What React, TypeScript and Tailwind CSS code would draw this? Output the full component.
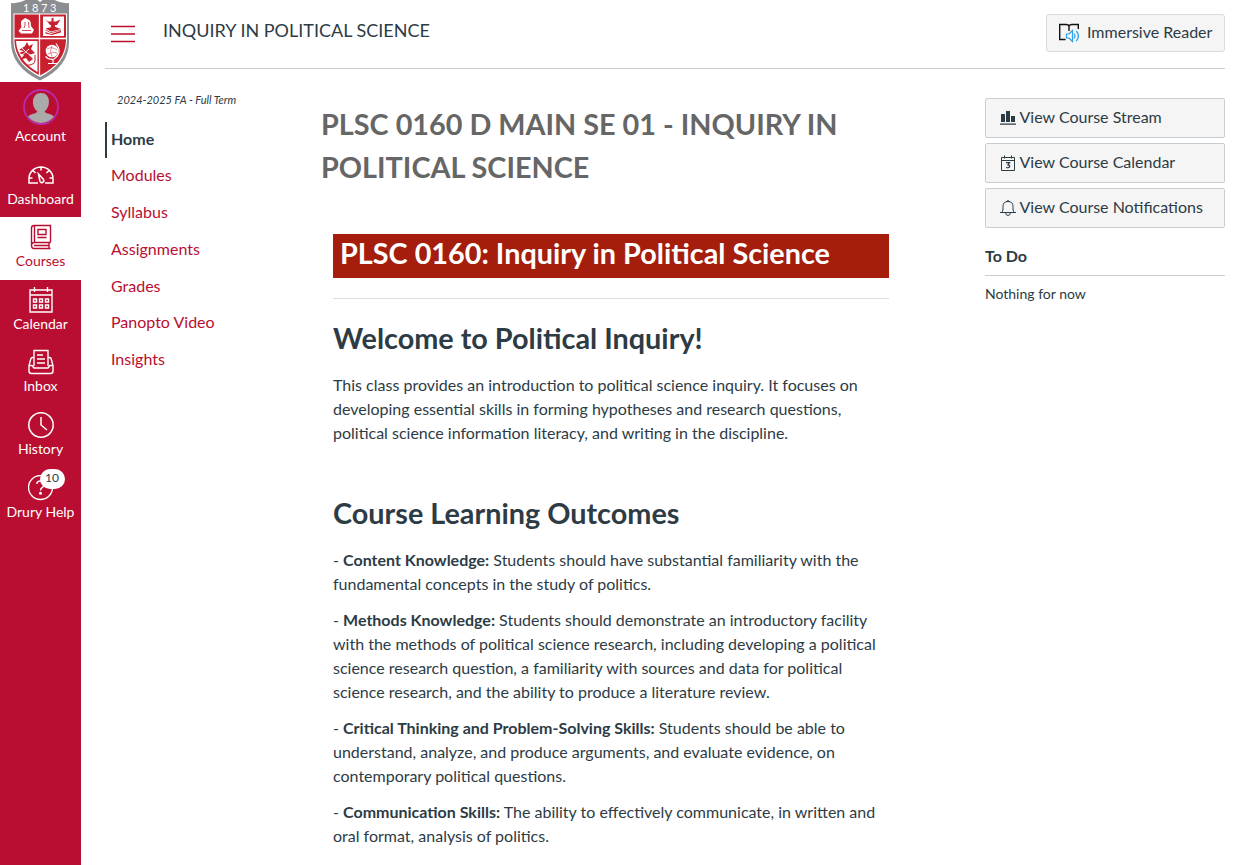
import type { ReactNode } from 'react';

const line = { fill: 'none', stroke: 'currentColor' } as const;

function Crest() {
  return (
    <svg width="81" height="82" viewBox="0 0 81 82" className="block">
      <path d="M11 3Q20 4 29 -2H51Q60 4 69 3V40Q70 66 40 80.500Q10 66 11 40Z" fill="#8b8d90" />
      <path d="M37.500 0H42.500L40 2Z" fill="#fff" />
      <text x="41" y="12" textAnchor="middle" fontSize="11" letterSpacing="2.600" fill="#fff" className="font-['Lato',sans-serif]">1873</text>
      <path d="M13.500 13.500H67V41Q66 64 40 77Q14 64 13.500 41Z" fill="#fff" />
      <path d="M14.500 14.500H66V41Q65 63 40 75.500Q15 63 14.500 41Z" fill="#c8202f" />
      <path d="M39.500 14V76M14 38.500H66" stroke="#fff" strokeWidth="1.300" />
      <path d="M43 16.500H64V36H43Z" fill="#fff" />
      <path d="M16 41H37.500V72Q17 60 16 41Z" fill="#fff" />
      <path d="M18.500 31L21.500 27Q19.500 20 24 19Q25 17 27 19Q31.500 20 31 26L34 30L32 33.500H21Z" fill="#fff" />
      <path d="M24 28Q25.500 25 25 22M28.500 22L29 28M22 30.500H31" stroke="#c8202f" strokeWidth=".8" fill="none" />
      <path d="M44.500 19L48 21.500H56L60.500 19.500L57 25H50Q48 22 44.500 19Z M51.500 18.500L53.500 17.500V21.500H51.500Z M51.500 24.500H55V27H50.500Z" fill="#c8202f" />
      <path d="M45.500 28.500L54 26.500L61 29L51 31.500Z M45.500 32L51 34L61 30.800V32.500L52 35L45.500 33.500Z" fill="#c8202f" />
      <path d="M45.500 30L51 32.700L61 30" stroke="#c8202f" strokeWidth=".8" fill="none" />
      <path d="M19 50L25 46L27 42L29 46L33 44L31 49L35 53L29 55L33 59L29 62L26 58L20 60L24 55L19 53L24 51Z" fill="#c8202f" />
      <path d="M22 48L27 53L32 56M21 56L29 49" fill="none" stroke="#fff" strokeWidth=".9" />
      <path d="M21 60Q25 66 30 65T35 61V55" fill="none" stroke="#c8202f" />
      <circle cx="52" cy="51" r="6.300" fill="#fff" />
      <path d="M47 49Q52 46 57 50M48 54Q53 51 57 53M52 45.500Q49 51.500 52 56.500" fill="none" stroke="#c8202f" strokeWidth=".5" />
      <path d="M56 43.500Q63 52.500 54 59Q49 60.500 45.500 56.500M53 59.500V63M48 63.500H57" fill="none" stroke="#fff" strokeWidth="1.200" />
    </svg>
  );
}

function Avatar() {
  return (
    <svg width="36" height="36" viewBox="0 0 36 36">
      <circle cx="18" cy="18" r="17" fill="#b90e31" stroke="#b92bad" strokeWidth="1.800" />
      <path d="M5 27.500C8 24.500 13 25 14.500 22.500C8 18 8 4 18 4C28 4 28 18 21.500 22.500C23 25 28 24.500 31 27.500Q26 34 18 34Q10 34 5 27.500Z" fill="#aaa" />
    </svg>
  );
}

const Dashboard = () => (
  <svg width="26" height="26" viewBox="0 0 26 26" {...line} strokeWidth="1.500">
    <path d="M10 21H1V16.500a12 11.500 0 0 1 24 0V21H17M13 5V8.500M5 8.500L7.500 11M21 8.500L18.500 11M1.500 16H4.500M21.500 16H24.500" />
    <path d="M10.500 12L12 19.500A2 2 0 1 0 15.500 17.500Z" />
  </svg>
);
const Courses = () => (
  <svg width="26" height="26" viewBox="0 0 26 26" {...line} strokeWidth="1.400">
    <path d="M22.500 18.500V1.500H6Q3.500 1.500 3.500 4V21.500M6.500 1.500V18.500M22.500 18.500H6Q3.500 18.500 3.500 21.500T6 24.500H22.500M21 18.500V24.500M6 21.500H21M10 5.500H18V10.500H10ZM9.500 13.500H18.500" />
  </svg>
);
const Calendar = () => (
  <svg width="26" height="26" viewBox="0 0 26 26" {...line} strokeWidth="1.400">
    <path d="M2 3H24V25H2ZM2 8H24M6.500 0V5M19.500 0V5" />
    <path d="M5.500 12H8.500V15H5.500ZM11.500 12H14.500V15H11.500ZM17.500 12H20.500V15H17.500ZM5.500 18H8.500V21H5.500ZM11.500 18H14.500V21H11.500ZM17.500 18H20.500V21H17.500Z" />
  </svg>
);
const Inbox = () => (
  <svg width="26" height="26" viewBox="0 0 26 26" {...line} strokeWidth="1.400">
    <path d="M6 17V1.500H20V17M9 6H15M9 10H17M9 14H17M6 8.500H4.500Q3 8.500 2.500 11L1 16.500V22Q1 24.500 3.500 24.500H22.500Q25 24.500 25 22V16.500L23.500 11Q23 8.500 21.500 8.500H20M1 16.500H4L6 19H20L22 16.500H25" />
  </svg>
);
const History = () => (
  <svg width="26" height="26" viewBox="0 0 26 26" {...line} strokeWidth="1.500">
    <circle cx="13" cy="13" r="12.200" /><path d="M13 5V13L19 18" />
  </svg>
);
const Help = () => (
  <svg width="26" height="26" viewBox="0 0 26 26" {...line} strokeWidth="1.400">
    <circle cx="12.500" cy="12.500" r="12" /><path d="M8.800 9Q9 6 12.500 6T16.200 9.500Q16 11.500 14 12.700Q12.500 13.700 12.500 15.500" /><circle cx="12.500" cy="18.200" r=".8" fill="currentColor" />
  </svg>
);

function NavItem({ label, icon, active, badge }: { label: string; icon: ReactNode; active?: boolean; badge?: string }) {
  return (
    <a className={`flex flex-col items-center pt-[7.500px] ${active ? '-mb-[0.830px] h-[63.500px] bg-white text-[#b90e31]' : 'h-[62.670px] text-white'}`}>
      <span className="relative h-[26px] w-[26px]">
        {icon}
        {badge && <span className="absolute -top-[5.500px] left-[12px] flex h-5 w-[25px] items-center justify-center rounded-full bg-white pb-[2px] text-[12px] leading-[18px] text-[#2d3b45]">{badge}</span>}
      </span>
      <span className="whitespace-nowrap text-[14px] leading-[21px]">{label}</span>
    </a>
  );
}

const Bars = () => (
  <svg width="16" height="16" viewBox="0 0 16 16" fill="currentColor"><path d="M1 4H5V12H1ZM6 1H10V12H6ZM11 6H15V12H11ZM0 13.500H16V14.700H0Z" /></svg>
);
const SmallCalendar = () => (
  <svg width="16" height="16" viewBox="0 0 16 16" {...line}>
    <path d="M1.500 2.500H14.500V15.500H1.500ZM1.500 5.500H14.500M4.500 .5V3.500M11.500 .5V3.500" />
    <path d="M6 7.700H9.500L8 9.800Q10 10 9.700 11.500Q9.200 13.300 6 12.500" strokeWidth="1.200" />
  </svg>
);
const Bell = () => (
  <svg width="16" height="16" viewBox="0 0 16 16" {...line}><path d="M0 12.500H16M1.500 12.500Q3 11.500 3 9V6.500Q3 1.500 8 1.500T13 6.500V9Q13 11.500 14.500 12.500M6.500 1.500Q8 -.5 9.500 1.500M5.500 12.500Q5.800 15.500 8 15.500T10.500 12.500" /></svg>
);

function SideButton({ icon, children }: { icon: ReactNode; children: ReactNode }) {
  return (
    <button className="flex h-10 w-full items-center gap-[3.500px] rounded-[2px] border border-[#c7cdd1] bg-[#f5f5f5] pl-[14px] text-left">
      {icon}<span className="pb-[2px] leading-[22px]">{children}</span>
    </button>
  );
}

const links = ['Modules', 'Syllabus', 'Assignments', 'Grades', 'Panopto Video', 'Insights'];

export default function App() {
  return (
    <div className="flex h-[865px] w-[1236px] overflow-hidden bg-white font-['Lato','Noto_Sans',sans-serif] text-base leading-6 text-[#2d3b45]">
      <nav className="w-[81px] shrink-0 bg-[#b90e31]">
        <div className="h-[82px] bg-white"><Crest /></div>
        <a className="flex h-[72px] flex-col items-center pt-[7px] text-white">
          <Avatar />
          <span className="text-[14px] leading-[21px]">Account</span>
        </a>
        <NavItem label="Dashboard" icon={<Dashboard />} />
        <NavItem label="Courses" icon={<Courses />} active />
        <NavItem label="Calendar" icon={<Calendar />} />
        <NavItem label="Inbox" icon={<Inbox />} />
        <NavItem label="History" icon={<History />} />
        <NavItem label="Drury Help" icon={<Help />} badge="10" />
      </nav>

      <div className="flex w-[1144px] flex-col pl-6">
        <header className="flex h-[69px] shrink-0 items-start border-b border-[#c7cdd1]">
          <svg width="24" height="18" viewBox="0 0 24 18" className="mt-[25px] ml-[6px]"><path d="M0 1.500H24M0 9H24M0 16.500H24" stroke="#b90e31" strokeWidth="1.300" /></svg>
          <h2 className="mt-[17px] ml-[28px] text-[18px] leading-[27px]">INQUIRY IN POLITICAL SCIENCE</h2>
          <button className="mt-[14px] ml-auto flex h-[38px] w-[179px] items-center gap-2 rounded-[3px] border border-[#d7dade] bg-[#f5f5f5] pl-[12px]">
            <svg width="20" height="20" viewBox="0 0 20 20" fill="none" className="shrink-0">
              <path d="M6.500 16.500H.7V1.500H7Q9.800 1.500 10 3.500Q10.200 1.500 13 1.500H19.300V6M10 3.500V8" stroke="#111" strokeWidth="1.400" />
              <path d="M7.500 11H10L13.500 7.500V18.500L10 15H7.500ZM15 10.500Q17 13 15 15.500M17.300 8Q21.500 13 17.300 18" stroke="#2a9fe8" strokeWidth="1.200" />
            </svg>
            <span className="pb-[2px] whitespace-nowrap">Immersive Reader</span>
          </button>
        </header>

        <div className="flex">
          <aside className="w-[192px] shrink-0 pt-[22px]">
            <p className="pl-3 text-[11px] leading-[18px] italic">2024-2025 FA - Full Term</p>
            <ul className="mt-[13px]">
              <li className="flex h-9 items-center border-l-2 border-[#2d3b45] pb-[2px] pl-1 font-bold">Home</li>
              {links.map((l) => <li key={l} className="flex h-[36.750px] items-center pb-[2px] pl-[6px] text-[#b90e31]">{l}</li>)}
            </ul>
          </aside>

          <main className="ml-6 w-[580px] shrink-0 pt-[34px]">
            <h1 className="h-[131px] text-[28.800px] leading-[43.200px] font-bold text-[#666]">PLSC 0160 D MAIN SE 01 - INQUIRY IN POLITICAL SCIENCE</h1>
            <div className="mx-3">
              <h2 className="h-11 bg-[#a51e0d] pl-[7px] text-[28.800px] leading-[38px] font-bold text-white">PLSC 0160: Inquiry in Political Science</h2>
              <hr className="mt-5 border-[#dddddd]" />
              <h2 className="mt-[18px] text-[28.800px] leading-[43px] font-bold">Welcome to Political Inquiry!</h2>
              <p className="mt-[13px]">This class provides an introduction to political science inquiry. It focuses on developing essential skills in forming hypotheses and research questions, political science information literacy, and writing in the discipline.</p>
              <h2 className="mt-[47px] mb-[13px] text-[28.800px] leading-[43px] font-bold">Course Learning Outcomes</h2>
              <div className="space-y-3">
                <p>- <b>Content Knowledge:</b> Students should have substantial familiarity with the fundamental concepts in the study of politics.</p>
                <p>- <b>Methods Knowledge:</b> Students should demonstrate an introductory facility with the methods of political science research, including developing a political science research question, a familiarity with sources and data for political science research, and the ability to produce a literature review.</p>
                <p>- <b>Critical Thinking and Problem-Solving Skills:</b> Students should be able to understand, analyze, and produce arguments, and evaluate evidence, on contemporary political questions.</p>
                <p>- <b>Communication Skills:</b> The ability to effectively communicate, in written and oral format, analysis of politics.</p>
              </div>
            </div>
          </main>

          <aside className="ml-auto w-[240px] pt-[29px]">
            <div className="space-y-[5px]">
              <SideButton icon={<Bars />}>View Course Stream</SideButton>
              <SideButton icon={<SmallCalendar />}>View Course Calendar</SideButton>
              <SideButton icon={<Bell />}>View Course Notifications</SideButton>
            </div>
            <h2 className="mt-4 h-8 border-b border-[#c7cdd1] font-bold">To Do</h2>
            <p className="mt-[7px] text-[14px] leading-[21px]">Nothing for now</p>
          </aside>
        </div>
      </div>
    </div>
  );
}
